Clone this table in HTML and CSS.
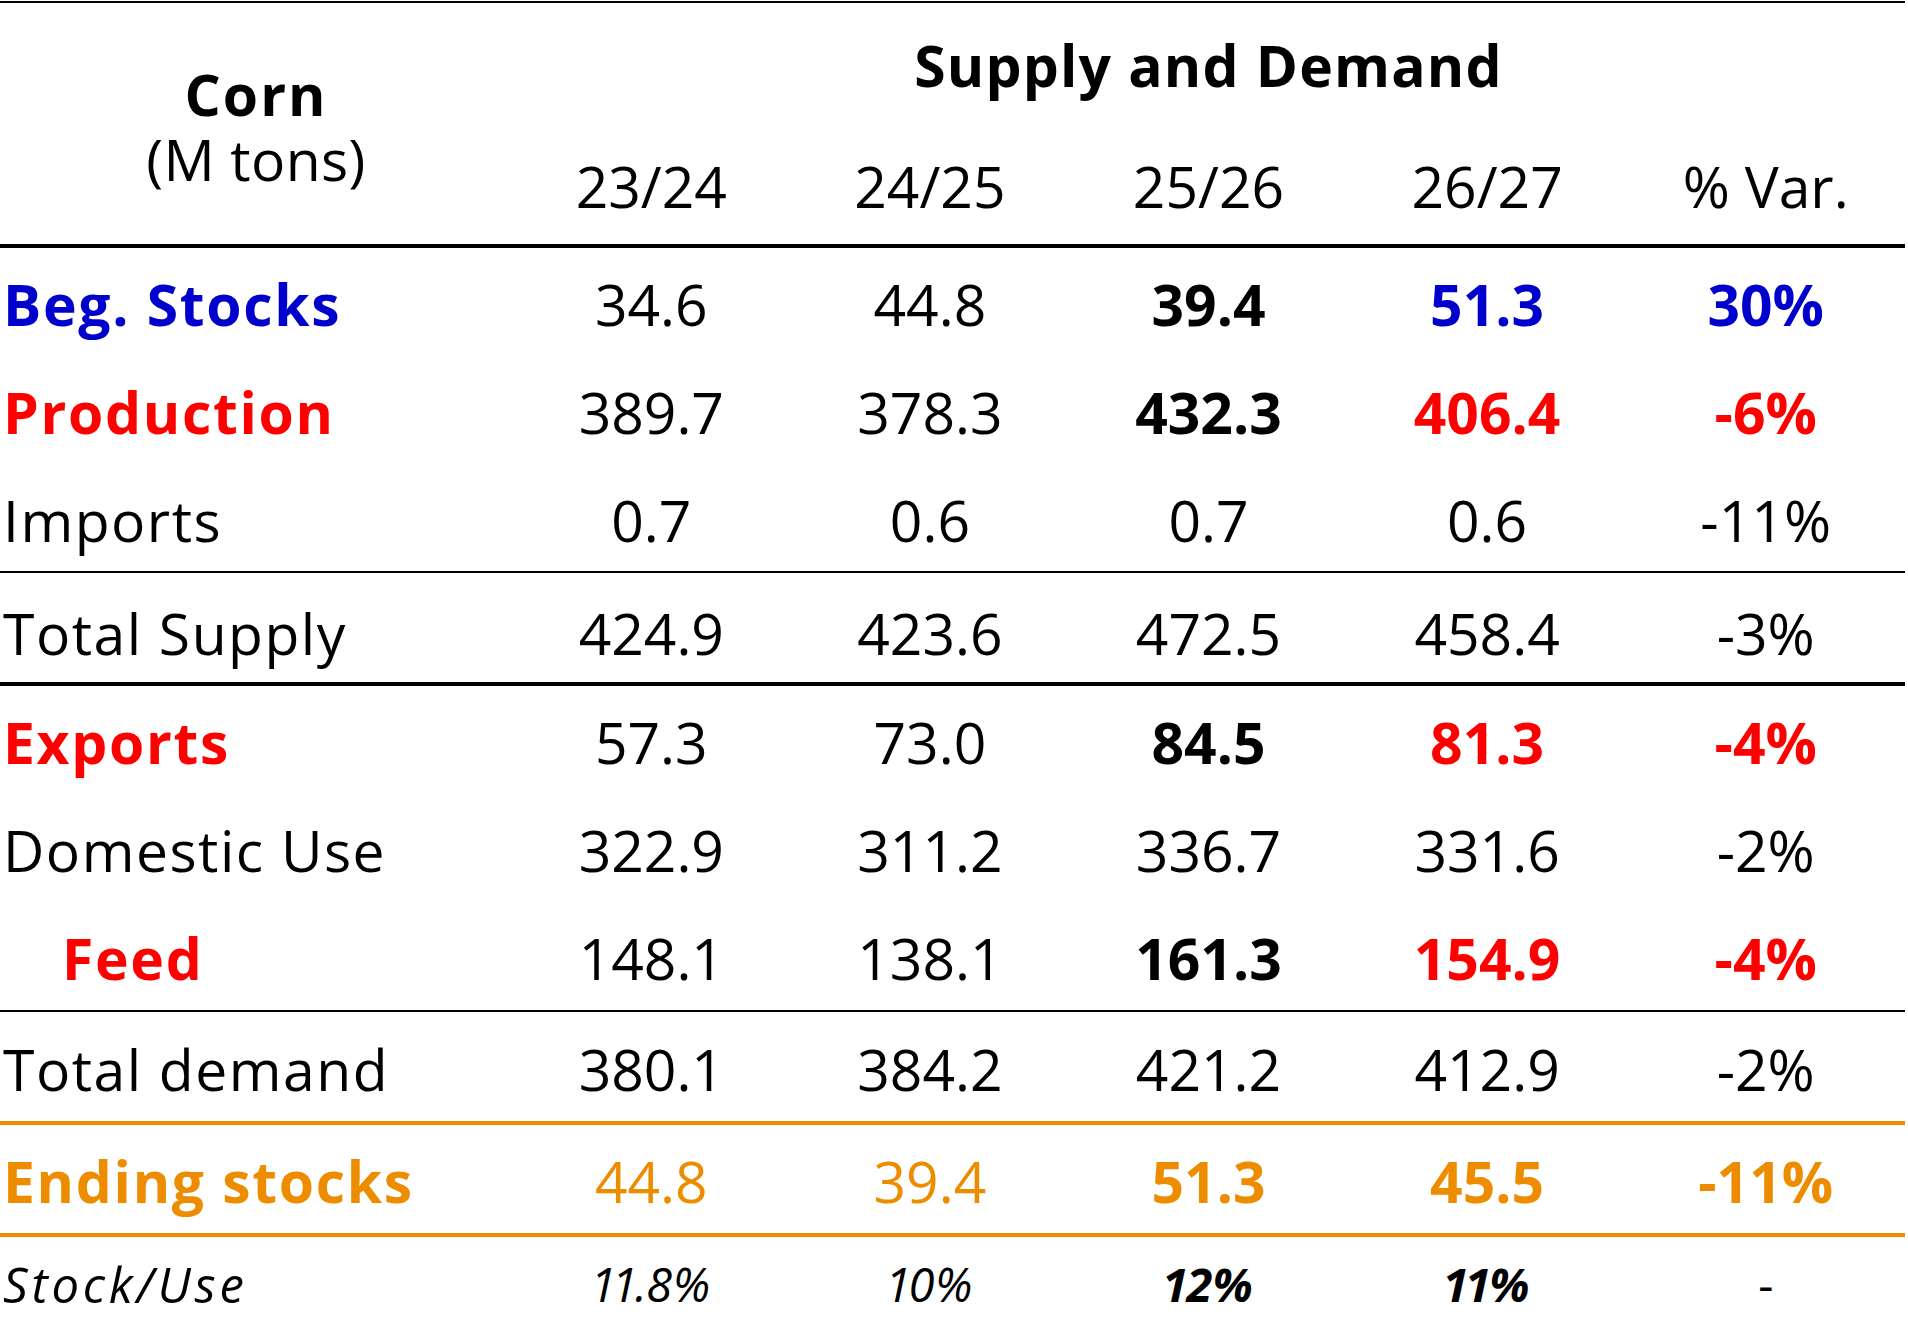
FILE: index.html
```html
<!DOCTYPE html>
<html lang="en">
<head>
<meta charset="utf-8">
<title>Corn Supply and Demand</title>
<link rel="stylesheet" href="styles.css">
</head>
<body>
<div class="sd-table">
  <div class="head">
    <div class="corn">
      <div class="corn-name">Corn</div>
      <div class="corn-unit">(M tons)</div>
    </div>
    <div class="title">Supply and Demand</div>
    <div class="yr">23/24</div>
    <div class="yr">24/25</div>
    <div class="yr">25/26</div>
    <div class="yr">26/27</div>
    <div class="yr">% Var.</div>
  </div>

  <div class="row">
    <div class="label b blue">Beg. Stocks</div>
    <div class="val">34.6</div>
    <div class="val">44.8</div>
    <div class="val b">39.4</div>
    <div class="val b blue">51.3</div>
    <div class="val b blue">30%</div>
  </div>
  <div class="row">
    <div class="label b red">Production</div>
    <div class="val">389.7</div>
    <div class="val">378.3</div>
    <div class="val b">432.3</div>
    <div class="val b red">406.4</div>
    <div class="val b red">-6%</div>
  </div>
  <div class="row r-imports">
    <div class="label">Imports</div>
    <div class="val">0.7</div>
    <div class="val">0.6</div>
    <div class="val">0.7</div>
    <div class="val">0.6</div>
    <div class="val">-11%</div>
  </div>
  <div class="row r-tsupply">
    <div class="label">Total Supply</div>
    <div class="val">424.9</div>
    <div class="val">423.6</div>
    <div class="val">472.5</div>
    <div class="val">458.4</div>
    <div class="val">-3%</div>
  </div>
  <div class="row">
    <div class="label b red">Exports</div>
    <div class="val">57.3</div>
    <div class="val">73.0</div>
    <div class="val b">84.5</div>
    <div class="val b red">81.3</div>
    <div class="val b red">-4%</div>
  </div>
  <div class="row">
    <div class="label">Domestic Use</div>
    <div class="val">322.9</div>
    <div class="val">311.2</div>
    <div class="val">336.7</div>
    <div class="val">331.6</div>
    <div class="val">-2%</div>
  </div>
  <div class="row r-feed">
    <div class="label b red feed">Feed</div>
    <div class="val">148.1</div>
    <div class="val">138.1</div>
    <div class="val b">161.3</div>
    <div class="val b red">154.9</div>
    <div class="val b red">-4%</div>
  </div>
  <div class="row r-tdemand">
    <div class="label">Total demand</div>
    <div class="val">380.1</div>
    <div class="val">384.2</div>
    <div class="val">421.2</div>
    <div class="val">412.9</div>
    <div class="val">-2%</div>
  </div>
  <div class="row r-end orange">
    <div class="label b">Ending stocks</div>
    <div class="val">44.8</div>
    <div class="val">39.4</div>
    <div class="val b">51.3</div>
    <div class="val b">45.5</div>
    <div class="val b">-11%</div>
  </div>
  <div class="row r-su">
    <div class="label">Stock/Use</div>
    <div class="val">11.8%</div>
    <div class="val">10%</div>
    <div class="val b">12%</div>
    <div class="val b">11%</div>
    <div class="val dash">-</div>
  </div>
</div>
</body>
</html>
```
FILE: styles.css
```css
html, body {
  margin: 0;
  padding: 0;
  background: #ffffff;
}

body {
  font-family: "Open Sans", "Noto Sans", sans-serif;
  color: #000000;
}

.sd-table {
  width: 1905px;
  margin-top: 1px;
  border-top: 2px solid #000000;
}

.head {
  display: grid;
  grid-template-columns: 512px repeat(5, 1fr);
  grid-template-rows: 105px 136px;
  border-bottom: 4px solid #000000;
  font-size: 57px;
}

.corn {
  grid-row: 1 / 3;
  grid-column: 1;
  text-align: center;
  padding-top: 59px;
  line-height: 65px;
}

.corn-name {
  font-weight: 700;
  letter-spacing: 2px;
}

.corn-unit {
  letter-spacing: 0.4px;
}

.title {
  grid-row: 1;
  grid-column: 2 / 7;
  text-align: center;
  font-weight: 700;
  letter-spacing: 1.2px;
  padding-top: 23px;
}

.yr {
  grid-row: 2;
  text-align: center;
  padding-top: 39px;
}

.row {
  display: grid;
  grid-template-columns: 512px repeat(5, 1fr);
  align-items: center;
  box-sizing: border-box;
  height: 108px;
  padding-top: 4px;
  font-size: 57px;
}

.label {
  padding-left: 3px;
  letter-spacing: 1.5px;
  white-space: nowrap;
}

.label.b {
  letter-spacing: 1.7px;
}

.label.feed {
  padding-left: 62px;
}

.val {
  text-align: center;
}

.b {
  font-weight: 700;
}

.blue {
  color: #0000cc;
}

.red {
  color: #ff0000;
}

.orange {
  color: #ee8c00;
}

.r-imports {
  height: 109px;
  border-bottom: 2px solid #000000;
}

.r-tsupply {
  height: 113px;
  padding-top: 10px;
  border-bottom: 4px solid #000000;
}

.r-feed {
  height: 110px;
  border-bottom: 2px solid #000000;
}

.r-tdemand {
  height: 113px;
  border-bottom: 4px solid #ee8c00;
}

.r-end {
  height: 112px;
  border-bottom: 4px solid #ee8c00;
}

.r-su {
  height: 92px;
  padding-top: 2px;
  font-size: 47px;
  font-style: italic;
}

.r-su .label {
  font-size: 49px;
  letter-spacing: 3.8px;
}

.r-su .val {
  font-variant-numeric: proportional-nums;
}

.r-su .dash {
  font-style: normal;
}
```
